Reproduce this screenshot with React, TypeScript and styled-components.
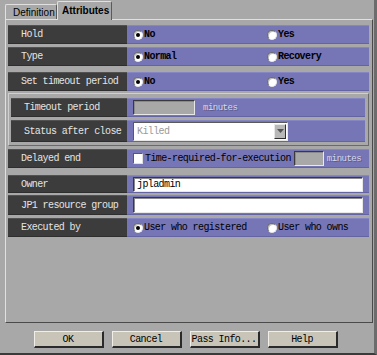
import styled, { createGlobalStyle } from 'styled-components';

const GlobalStyle = createGlobalStyle`
  html, body {
    margin: 0;
    padding: 0;
    background: #a8a8a8;
  }
  * {
    box-sizing: border-box;
  }
`;

const mono = `"Liberation Mono", "DejaVu Sans Mono", monospace`;

const Window = styled.div`
  width: 377px;
  height: 355px;
  background: #a8a8a8;
  border-right: 3px solid #6c6c6c;
  border-bottom: 2px solid #3a3a3a;
  padding: 1px 0 0 5px;
  display: flex;
  flex-direction: column;
  overflow: hidden;
`;

const TabBar = styled.div`
  display: flex;
  align-items: flex-end;
  height: 18px;
  position: relative;
  z-index: 1;
`;

const Tab = styled.div<{ $active?: boolean }>`
  font-family: "Liberation Sans", Arial, sans-serif;
  font-size: 10px;
  font-weight: ${(p) => (p.$active ? 700 : 400)};
  color: #000;
  background: #a8a8a8;
  border-top: 1px solid #e0e0e0;
  border-left: 1px solid #e0e0e0;
  border-right: 1px solid #5a5a5a;
  border-radius: 2px 2px 0 0;
  height: ${(p) => (p.$active ? '19px' : '15px')};
  margin-bottom: ${(p) => (p.$active ? '-1px' : '0')};
  padding: ${(p) => (p.$active ? '3px 5px 0 4px' : '2px 4px 0 7px')};
  width: ${(p) => (p.$active ? '55px' : '52px')};
  white-space: nowrap;
`;

const Panel = styled.div`
  width: 368px;
  height: 304px;
  border-top: 1px solid #e0e0e0;
  border-left: 1px solid #e0e0e0;
  border-right: 1px solid #4a4a4a;
  border-bottom: 1px solid #4a4a4a;
  padding: 5px 3px 0 2px;
  display: flex;
  flex-direction: column;
`;

const Row = styled.div<{ $mt?: number; $h?: number }>`
  display: flex;
  margin-top: ${(p) => p.$mt ?? 0}px;
  height: ${(p) => p.$h ?? 19}px;
`;

const Label = styled.div<{ $w?: number }>`
  width: ${(p) => p.$w ?? 119}px;
  flex: none;
  background: #3c3c3c;
  color: #e4e4e4;
  font-family: ${mono};
  font-size: 10px;
  letter-spacing: -0.6px;
  display: flex;
  align-items: center;
  padding-left: 13px;
  border-top: 1px solid #525252;
  border-bottom: 1px solid #2e2e2e;
  white-space: nowrap;
`;

const Value = styled.div`
  flex: 1;
  background: #7676b6;
  display: flex;
  align-items: center;
  padding-left: 6px;
  border-top: 1px solid #8686c4;
  border-bottom: 1px solid #6464a2;
  font-family: ${mono};
  font-size: 10px;
  letter-spacing: -0.6px;
  color: #000;
  white-space: nowrap;
`;

const Choice = styled.label<{ $w?: number; $bold?: boolean }>`
  display: flex;
  align-items: center;
  gap: 1px;
  width: ${(p) => (p.$w ? `${p.$w}px` : 'auto')};
  font-weight: ${(p) => (p.$bold ? 700 : 400)};
`;

const Radio = styled.span<{ $on?: boolean }>`
  width: 10px;
  height: 10px;
  border-radius: 50%;
  background: #fff;
  border-top: 1px solid #6a6a6a;
  border-left: 1px solid #6a6a6a;
  border-right: 1px solid #e8e8e8;
  border-bottom: 1px solid #e8e8e8;
  box-shadow: inset 1px 1px 0 #bdbdbd;
  display: flex;
  align-items: center;
  justify-content: center;
  flex: none;
  &::after {
    content: '';
    width: 4px;
    height: 4px;
    border-radius: 50%;
    background: ${(p) => (p.$on ? '#000' : 'transparent')};
  }
`;

const Check = styled.span`
  width: 10px;
  height: 11px;
  background: #fff;
  border-top: 1px solid #5a5a5a;
  border-left: 1px solid #5a5a5a;
  border-right: 1px solid #e0e0e0;
  border-bottom: 1px solid #e0e0e0;
  flex: none;
  margin-right: 2px;
`;

const Field = styled.div<{ $w: number; $off?: boolean; $h?: number; $ml?: number }>`
  width: ${(p) => p.$w}px;
  height: ${(p) => p.$h ?? 15}px;
  margin-left: ${(p) => p.$ml ?? 0}px;
  background: ${(p) => (p.$off ? '#a8a8a8' : '#fff')};
  border-top: 1px solid #3a3a3a;
  border-left: 1px solid #3a3a3a;
  border-right: 1px solid #e8e8e8;
  border-bottom: 1px solid #e8e8e8;
  box-shadow: inset 1px 1px 0 #8a8a8a;
  padding-left: 3px;
  display: flex;
  align-items: center;
  color: #000;
  flex: none;
`;

const Faded = styled.span<{ $ml?: number }>`
  margin-left: ${(p) => p.$ml ?? 0}px;
  color: #d8d8e8;
  text-shadow: 1px 1px 0 #5a5a8a;
  font-size: 9px;
  letter-spacing: -0.5px;
`;

const Combo = styled.div`
  width: 155px;
  height: 19px;
  display: flex;
  background: #fff;
  border-top: 1px solid #5a5a5a;
  border-left: 1px solid #5a5a5a;
  border-right: 1px solid #e8e8e8;
  border-bottom: 1px solid #e8e8e8;
  padding: 1px;
`;

const ComboText = styled.div`
  flex: 1;
  color: #9a9a9a;
  display: flex;
  align-items: center;
  padding-left: 2px;
`;

const ComboButton = styled.div`
  width: 12px;
  background: #b8b8b8;
  border-top: 1px solid #e8e8e8;
  border-left: 1px solid #e8e8e8;
  border-right: 1px solid #303030;
  border-bottom: 1px solid #303030;
  display: flex;
  align-items: center;
  justify-content: center;
`;

const Group = styled.div`
  margin-top: 2px;
  width: 361px;
  border-top: 1px solid #d0d0d0;
  border-left: 1px solid #d0d0d0;
  border-right: 1px solid #6a6a6a;
  border-bottom: 1px solid #6a6a6a;
  padding: 4px 3px 3px 2px;
  display: flex;
  flex-direction: column;
`;

const ButtonBar = styled.div`
  display: flex;
  justify-content: center;
  gap: 8px;
  margin-top: 8px;
  padding-right: 8px;
`;

const Button = styled.button`
  width: 70px;
  height: 17px;
  background: #c8c5b8;
  border-top: 1px solid #f0eee6;
  border-left: 1px solid #f0eee6;
  border-right: 2px solid #2a2a2a;
  border-bottom: 2px solid #2a2a2a;
  font-family: ${mono};
  font-size: 10px;
  letter-spacing: -0.6px;
  color: #000;
  padding: 0;
`;

export default function App() {
  return (
    <>
      <GlobalStyle />
      <Window>
        <TabBar>
          <Tab>Definition</Tab>
          <Tab $active>Attributes</Tab>
        </TabBar>
        <Panel>
          <Row>
            <Label>Hold</Label>
            <Value>
              <Choice $w={134} $bold>
                <Radio $on />
                No
              </Choice>
              <Choice $bold>
                <Radio />
                Yes
              </Choice>
            </Value>
          </Row>
          <Row $mt={3}>
            <Label>Type</Label>
            <Value>
              <Choice $w={134} $bold>
                <Radio $on />
                Normal
              </Choice>
              <Choice $bold>
                <Radio />
                Recovery
              </Choice>
            </Value>
          </Row>
          <Row $mt={6}>
            <Label>Set timeout period</Label>
            <Value>
              <Choice $w={134} $bold>
                <Radio $on />
                No
              </Choice>
              <Choice $bold>
                <Radio />
                Yes
              </Choice>
            </Value>
          </Row>
          <Group>
            <Row>
              <Label $w={116}>Timeout period</Label>
              <Value>
                <Field $w={62} $off />
                <Faded $ml={8}>minutes</Faded>
              </Value>
            </Row>
            <Row $mt={3} $h={22}>
              <Label $w={116}>Status after close</Label>
              <Value>
                <Combo>
                  <ComboText>Killed</ComboText>
                  <ComboButton>
                    <svg width="7" height="4" viewBox="0 0 7 4">
                      <path d="M0 0h7L3.5 4z" fill="#555" />
                    </svg>
                  </ComboButton>
                </Combo>
              </Value>
            </Row>
          </Group>
          <Row $mt={3}>
            <Label>Delayed end</Label>
            <Value>
              <Check />
              Time-required-for-execution
              <Field $w={30} $off $ml={3} />
              <Faded $ml={3}>minutes</Faded>
            </Value>
          </Row>
          <Row $mt={7} $h={18}>
            <Label>Owner</Label>
            <Value>
              <Field $w={230}>jpladmin</Field>
            </Value>
          </Row>
          <Row $mt={2} $h={20}>
            <Label>JP1 resource group</Label>
            <Value>
              <Field $w={230} $h={16} />
            </Value>
          </Row>
          <Row $mt={3}>
            <Label>Executed by</Label>
            <Value>
              <Choice $w={134}>
                <Radio $on />
                User who registered
              </Choice>
              <Choice>
                <Radio />
                User who owns
              </Choice>
            </Value>
          </Row>
        </Panel>
        <ButtonBar>
          <Button>OK</Button>
          <Button>Cancel</Button>
          <Button>Pass Info...</Button>
          <Button>Help</Button>
        </ButtonBar>
      </Window>
    </>
  );
}
